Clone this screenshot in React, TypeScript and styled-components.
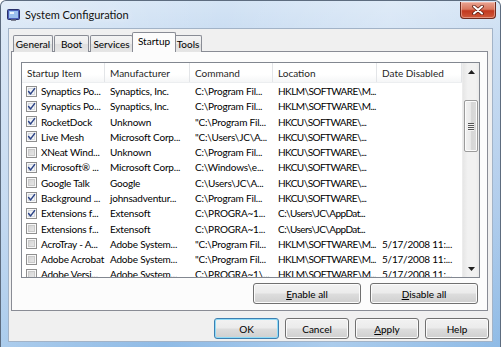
import styled, { createGlobalStyle } from "styled-components";

const GlobalStyle = createGlobalStyle`
    html, body {
        margin: 0;
        padding: 0;
        background: #ffffff;
    }

    * {
        box-sizing: border-box;
    }
`;

const Window = styled.div`
    width: 501px;
    height: 347px;
    display: flex;
    flex-direction: column;
    padding: 0 7px 5px 7px;
    border: 1px solid #5d6c7f;
    border-bottom: none;
    border-radius: 6px 6px 0 0;
    background:
        linear-gradient(100deg, rgba(255, 255, 255, 0.35) 0%, rgba(255, 255, 255, 0) 40%, rgba(255, 255, 255, 0.25) 70%, rgba(255, 255, 255, 0) 100%),
        linear-gradient(180deg, #d4e4f5 0%, #c7dbf1 12%, #aecbeb 60%, #8fbbe6 100%);
    font-family: "Lato", "Liberation Sans", sans-serif;
    font-size: 10px;
    color: #000000;
`;

const TitleBar = styled.div`
    height: 27px;
    display: flex;
    align-items: flex-start;
`;

const AppIcon = styled.svg`
    width: 13px;
    height: 12px;
    margin: 8px 5px 0 -1px;
    flex-shrink: 0;
`;

const Title = styled.span`
    font-size: 11px;
    line-height: 14px;
    margin-top: 7px;
    color: #111111;
    text-shadow: 0 0 6px rgba(255, 255, 255, 0.9);
`;

const CloseButton = styled.div`
    width: 36px;
    height: 17px;
    margin: 1px -3px 0 auto;
    display: flex;
    align-items: center;
    justify-content: center;
    border: 1px solid #6d2a1e;
    border-top: none;
    border-radius: 0 0 4px 4px;
    background: linear-gradient(180deg, #e9a493 0%, #d9785f 45%, #c2391f 55%, #cf5a3c 100%);
    box-shadow: inset 0 0 0 1px rgba(255, 220, 210, 0.45);
`;

const Client = styled.div`
    flex: 1;
    display: flex;
    flex-direction: column;
    border: 1px solid #a2b3c7;
    background: #f0f0f0;
    padding: 3px 4px 0 2px;
`;

const TabStrip = styled.div`
    height: 20px;
    display: flex;
    align-items: flex-end;
    padding-left: 2px;
    margin-bottom: -1px;
`;

const Tab = styled.div<{ $active?: boolean; $width: number }>`
    position: relative;
    width: ${p => p.$width}px;
    height: ${p => (p.$active ? 20 : 17)}px;
    margin: ${p => (p.$active ? "0 -2px" : "0 1px 0 0")};
    display: flex;
    justify-content: center;
    padding-top: 2px;
    border: 1px solid #898c95;
    border-bottom: none;
    border-radius: 2px 2px 0 0;
    background: ${p =>
        p.$active
            ? "#fcfcfc"
            : "linear-gradient(180deg, #f4f4f4 0%, #ececec 50%, #dfdfdf 51%, #e6e6e6 100%)"};
    z-index: ${p => (p.$active ? 2 : 0)};
    white-space: nowrap;
`;

const TabPanel = styled.div`
    display: flex;
    flex-direction: column;
    border: 1px solid #898c95;
    background: #fcfcfc;
    padding: 10px 7px 6px 9px;
`;

const ListView = styled.div`
    height: 216px;
    display: flex;
    border: 1px solid #828790;
    background: #ffffff;
    overflow: hidden;
`;

const Table = styled.div`
    flex: 1;
    display: flex;
    flex-direction: column;
    overflow: hidden;
`;

const columns = "83px 85px 83px 104px 85px";

const HeaderRow = styled.div`
    height: 20px;
    flex-shrink: 0;
    display: grid;
    grid-template-columns: ${columns};
    background: linear-gradient(180deg, #ffffff 0%, #ffffff 60%, #f5f6f7 100%);
    border-bottom: 1px solid #eceef0;
`;

const HeaderCell = styled.div`
    display: flex;
    align-items: center;
    padding-left: 5px;
    border-right: 1px solid #e3e5e8;
    color: #262626;
    white-space: nowrap;
    overflow: hidden;
`;

const Body = styled.div`
    padding-top: 0.5px;
`;

const Row = styled.div`
    height: 15.27px;
    display: grid;
    grid-template-columns: ${columns};
    align-items: center;
`;

const Cell = styled.div<{ $tight?: boolean }>`
    padding-left: 5px;
    letter-spacing: ${p => (p.$tight ? "-0.55px" : "-0.2px")};
    white-space: nowrap;
    overflow: hidden;
`;

const ItemCell = styled.div`
    display: flex;
    align-items: center;
    gap: 4px;
    padding-left: 4px;
    letter-spacing: -0.2px;
    white-space: nowrap;
    overflow: hidden;
`;

const CheckBox = styled.span<{ $checked: boolean }>`
    width: 11px;
    height: 11px;
    flex-shrink: 0;
    display: flex;
    align-items: center;
    justify-content: center;
    border: 1px solid #8f8f8f;
    box-shadow: inset 0 0 0 1px #f8f8f8, inset 0 0 0 2px ${p => (p.$checked ? "#d4d9e0" : "#c9c9c9")};
    background: ${p =>
        p.$checked
            ? "linear-gradient(135deg, #e8ebef 0%, #fbfbfb 100%)"
            : "linear-gradient(135deg, #cfcfcf 0%, #ececec 100%)"};
`;

const ScrollBar = styled.div`
    width: 17px;
    flex-shrink: 0;
    display: flex;
    flex-direction: column;
    background: linear-gradient(90deg, #e6e6e6 0%, #f1f1f1 30%, #f1f1f1 80%, #e9e9e9 100%);
    border-left: 1px solid #ececec;
`;

const ScrollArrow = styled.div`
    height: 17px;
    display: flex;
    align-items: center;
    justify-content: center;
`;

const ScrollTrack = styled.div`
    flex: 1;
    padding: 20px 1px 0 1px;
`;

const Thumb = styled.div`
    height: 52px;
    display: flex;
    flex-direction: column;
    align-items: center;
    justify-content: center;
    gap: 1px;
    border: 1px solid #9b9b9b;
    border-radius: 2px;
    background: linear-gradient(90deg, #f2f2f2 0%, #e9e9e9 45%, #d6d6d6 55%, #dcdcdc 100%);
    box-shadow: inset 0 0 0 1px #fbfbfb;
`;

const Grip = styled.span`
    width: 6px;
    height: 1px;
    background: #555555;
    box-shadow: 0 1px 0 #f4f4f4;
`;

const ActionRow = styled.div`
    display: flex;
    justify-content: flex-end;
    gap: 9px;
    margin-top: 5px;
    padding-right: 2px;
`;

const Button = styled.button<{ $width: number; $focused?: boolean }>`
    width: ${p => p.$width}px;
    height: 21px;
    padding: 0;
    font-family: inherit;
    font-size: 10px;
    color: #000000;
    border: 1px solid ${p => (p.$focused ? "#3c7fb1" : "#707070")};
    border-radius: 3px;
    background: linear-gradient(180deg, #f2f2f2 0%, #ebebeb 48%, #dddddd 52%, #cfcfcf 100%);
    box-shadow: inset 0 0 0 1px ${p => (p.$focused ? "#8fdcf8" : "#fbfbfb")};

    u {
        text-decoration: underline;
        text-underline-offset: 1px;
    }
`;

const DialogButtons = styled.div`
    display: flex;
    justify-content: flex-end;
    gap: 6px;
    margin-top: 7px;
    margin-right: -1px;
`;

type Entry = {
    checked: boolean;
    item: string;
    manufacturer: string;
    command: string;
    location: string;
    date: string;
};

const entries: Entry[] = [
    { checked: true, item: "Synaptics Po...", manufacturer: "Synaptics, Inc.", command: "C:\\Program Fil...", location: "HKLM\\SOFTWARE\\M...", date: "" },
    { checked: true, item: "Synaptics Po...", manufacturer: "Synaptics, Inc.", command: "C:\\Program Fil...", location: "HKLM\\SOFTWARE\\M...", date: "" },
    { checked: true, item: "RocketDock", manufacturer: "Unknown", command: "\"C:\\Program Fil...", location: "HKCU\\SOFTWARE\\...", date: "" },
    { checked: true, item: "Live Mesh", manufacturer: "Microsoft Corp...", command: "\"C:\\Users\\JC\\A...", location: "HKCU\\SOFTWARE\\...", date: "" },
    { checked: false, item: "XNeat Wind...", manufacturer: "Unknown", command: "C:\\Program Fil...", location: "HKCU\\SOFTWARE\\...", date: "" },
    { checked: true, item: "Microsoft® ...", manufacturer: "Microsoft Corp...", command: "C:\\Windows\\e...", location: "HKCU\\SOFTWARE\\...", date: "" },
    { checked: false, item: "Google Talk", manufacturer: "Google", command: "C:\\Users\\JC\\A...", location: "HKCU\\SOFTWARE\\...", date: "" },
    { checked: true, item: "Background ...", manufacturer: "johnsadventur...", command: "C:\\Program Fil...", location: "HKCU\\SOFTWARE\\...", date: "" },
    { checked: true, item: "Extensions f...", manufacturer: "Extensoft", command: "C:\\PROGRA~1...", location: "C:\\Users\\JC\\AppDat...", date: "" },
    { checked: false, item: "Extensions f...", manufacturer: "Extensoft", command: "C:\\PROGRA~1...", location: "C:\\Users\\JC\\AppDat...", date: "" },
    { checked: false, item: "AcroTray - A...", manufacturer: "Adobe System...", command: "\"C:\\Program Fil...", location: "HKLM\\SOFTWARE\\M...", date: "5/17/2008 11:..." },
    { checked: false, item: "Adobe Acrobat", manufacturer: "Adobe System...", command: "\"C:\\Program Fil...", location: "HKLM\\SOFTWARE\\M...", date: "5/17/2008 11:..." },
    { checked: false, item: "Adobe Versi...", manufacturer: "Adobe System...", command: "C:\\PROGRA~1\\...", location: "HKLM\\SOFTWARE\\M...", date: "5/17/2008 11:..." },
];

const tabs = [
    { label: "General", width: 40 },
    { label: "Boot", width: 35 },
    { label: "Services", width: 43 },
    { label: "Startup", width: 44, active: true },
    { label: "Tools", width: 28 },
];

const Check = () => (
    <svg width="9" height="9" viewBox="0 0 9 9">
        <path d="M1.6 4.6 L3.6 6.9 L7.6 1.6" fill="none" stroke="#2b4387" strokeWidth="1.5" strokeLinecap="round" strokeLinejoin="round" />
    </svg>
);

const App = () => (
    <>
        <GlobalStyle />
        <Window>
            <TitleBar>
                <AppIcon viewBox="0 0 13 12">
                    <rect x="0.5" y="0.5" width="12" height="10" rx="1" fill="#4b5fb8" stroke="#28306a" />
                    <rect x="2" y="2" width="9" height="7" fill="#9cc0ef" />
                    <rect x="3" y="3" width="4" height="2" fill="#ffffff" opacity="0.8" />
                    <rect x="4" y="10.5" width="5" height="1.5" fill="#7a7f8f" />
                </AppIcon>
                <Title>System Configuration</Title>
                <CloseButton>
                    <svg width="12" height="10" viewBox="0 0 12 10">
                        <path d="M2 1.5 L10 8.5 M10 1.5 L2 8.5" stroke="#5b1c12" strokeWidth="3.6" strokeLinecap="round" />
                        <path d="M2 1.5 L10 8.5 M10 1.5 L2 8.5" stroke="#ffffff" strokeWidth="2" strokeLinecap="round" />
                    </svg>
                </CloseButton>
            </TitleBar>
            <Client>
                <TabStrip>
                    {tabs.map(t => (
                        <Tab key={t.label} $active={t.active} $width={t.width}>
                            {t.label}
                        </Tab>
                    ))}
                </TabStrip>
                <TabPanel>
                    <ListView>
                        <Table>
                            <HeaderRow>
                                <HeaderCell>Startup Item</HeaderCell>
                                <HeaderCell>Manufacturer</HeaderCell>
                                <HeaderCell>Command</HeaderCell>
                                <HeaderCell>Location</HeaderCell>
                                <HeaderCell>Date Disabled</HeaderCell>
                            </HeaderRow>
                            <Body>
                                {entries.map((e, i) => (
                                    <Row key={i}>
                                        <ItemCell>
                                            <CheckBox $checked={e.checked}>{e.checked && <Check />}</CheckBox>
                                            {e.item}
                                        </ItemCell>
                                        <Cell>{e.manufacturer}</Cell>
                                        <Cell>{e.command}</Cell>
                                        <Cell $tight>{e.location}</Cell>
                                        <Cell>{e.date}</Cell>
                                    </Row>
                                ))}
                            </Body>
                        </Table>
                        <ScrollBar>
                            <ScrollArrow>
                                <svg width="7" height="4" viewBox="0 0 7 4">
                                    <path d="M0 4 L3.5 0 L7 4 Z" fill="#1f1f1f" />
                                </svg>
                            </ScrollArrow>
                            <ScrollTrack>
                                <Thumb>
                                    <Grip />
                                    <Grip />
                                    <Grip />
                                    <Grip />
                                </Thumb>
                            </ScrollTrack>
                            <ScrollArrow>
                                <svg width="7" height="4" viewBox="0 0 7 4">
                                    <path d="M0 0 L7 0 L3.5 4 Z" fill="#1f1f1f" />
                                </svg>
                            </ScrollArrow>
                        </ScrollBar>
                    </ListView>
                    <ActionRow>
                        <Button $width={108}><u>E</u>nable all</Button>
                        <Button $width={108}><u>D</u>isable all</Button>
                    </ActionRow>
                </TabPanel>
                <DialogButtons>
                    <Button $width={65} $focused>OK</Button>
                    <Button $width={64}>Cancel</Button>
                    <Button $width={64}><u>A</u>pply</Button>
                    <Button $width={64}>Help</Button>
                </DialogButtons>
            </Client>
        </Window>
    </>
);

export default App;
